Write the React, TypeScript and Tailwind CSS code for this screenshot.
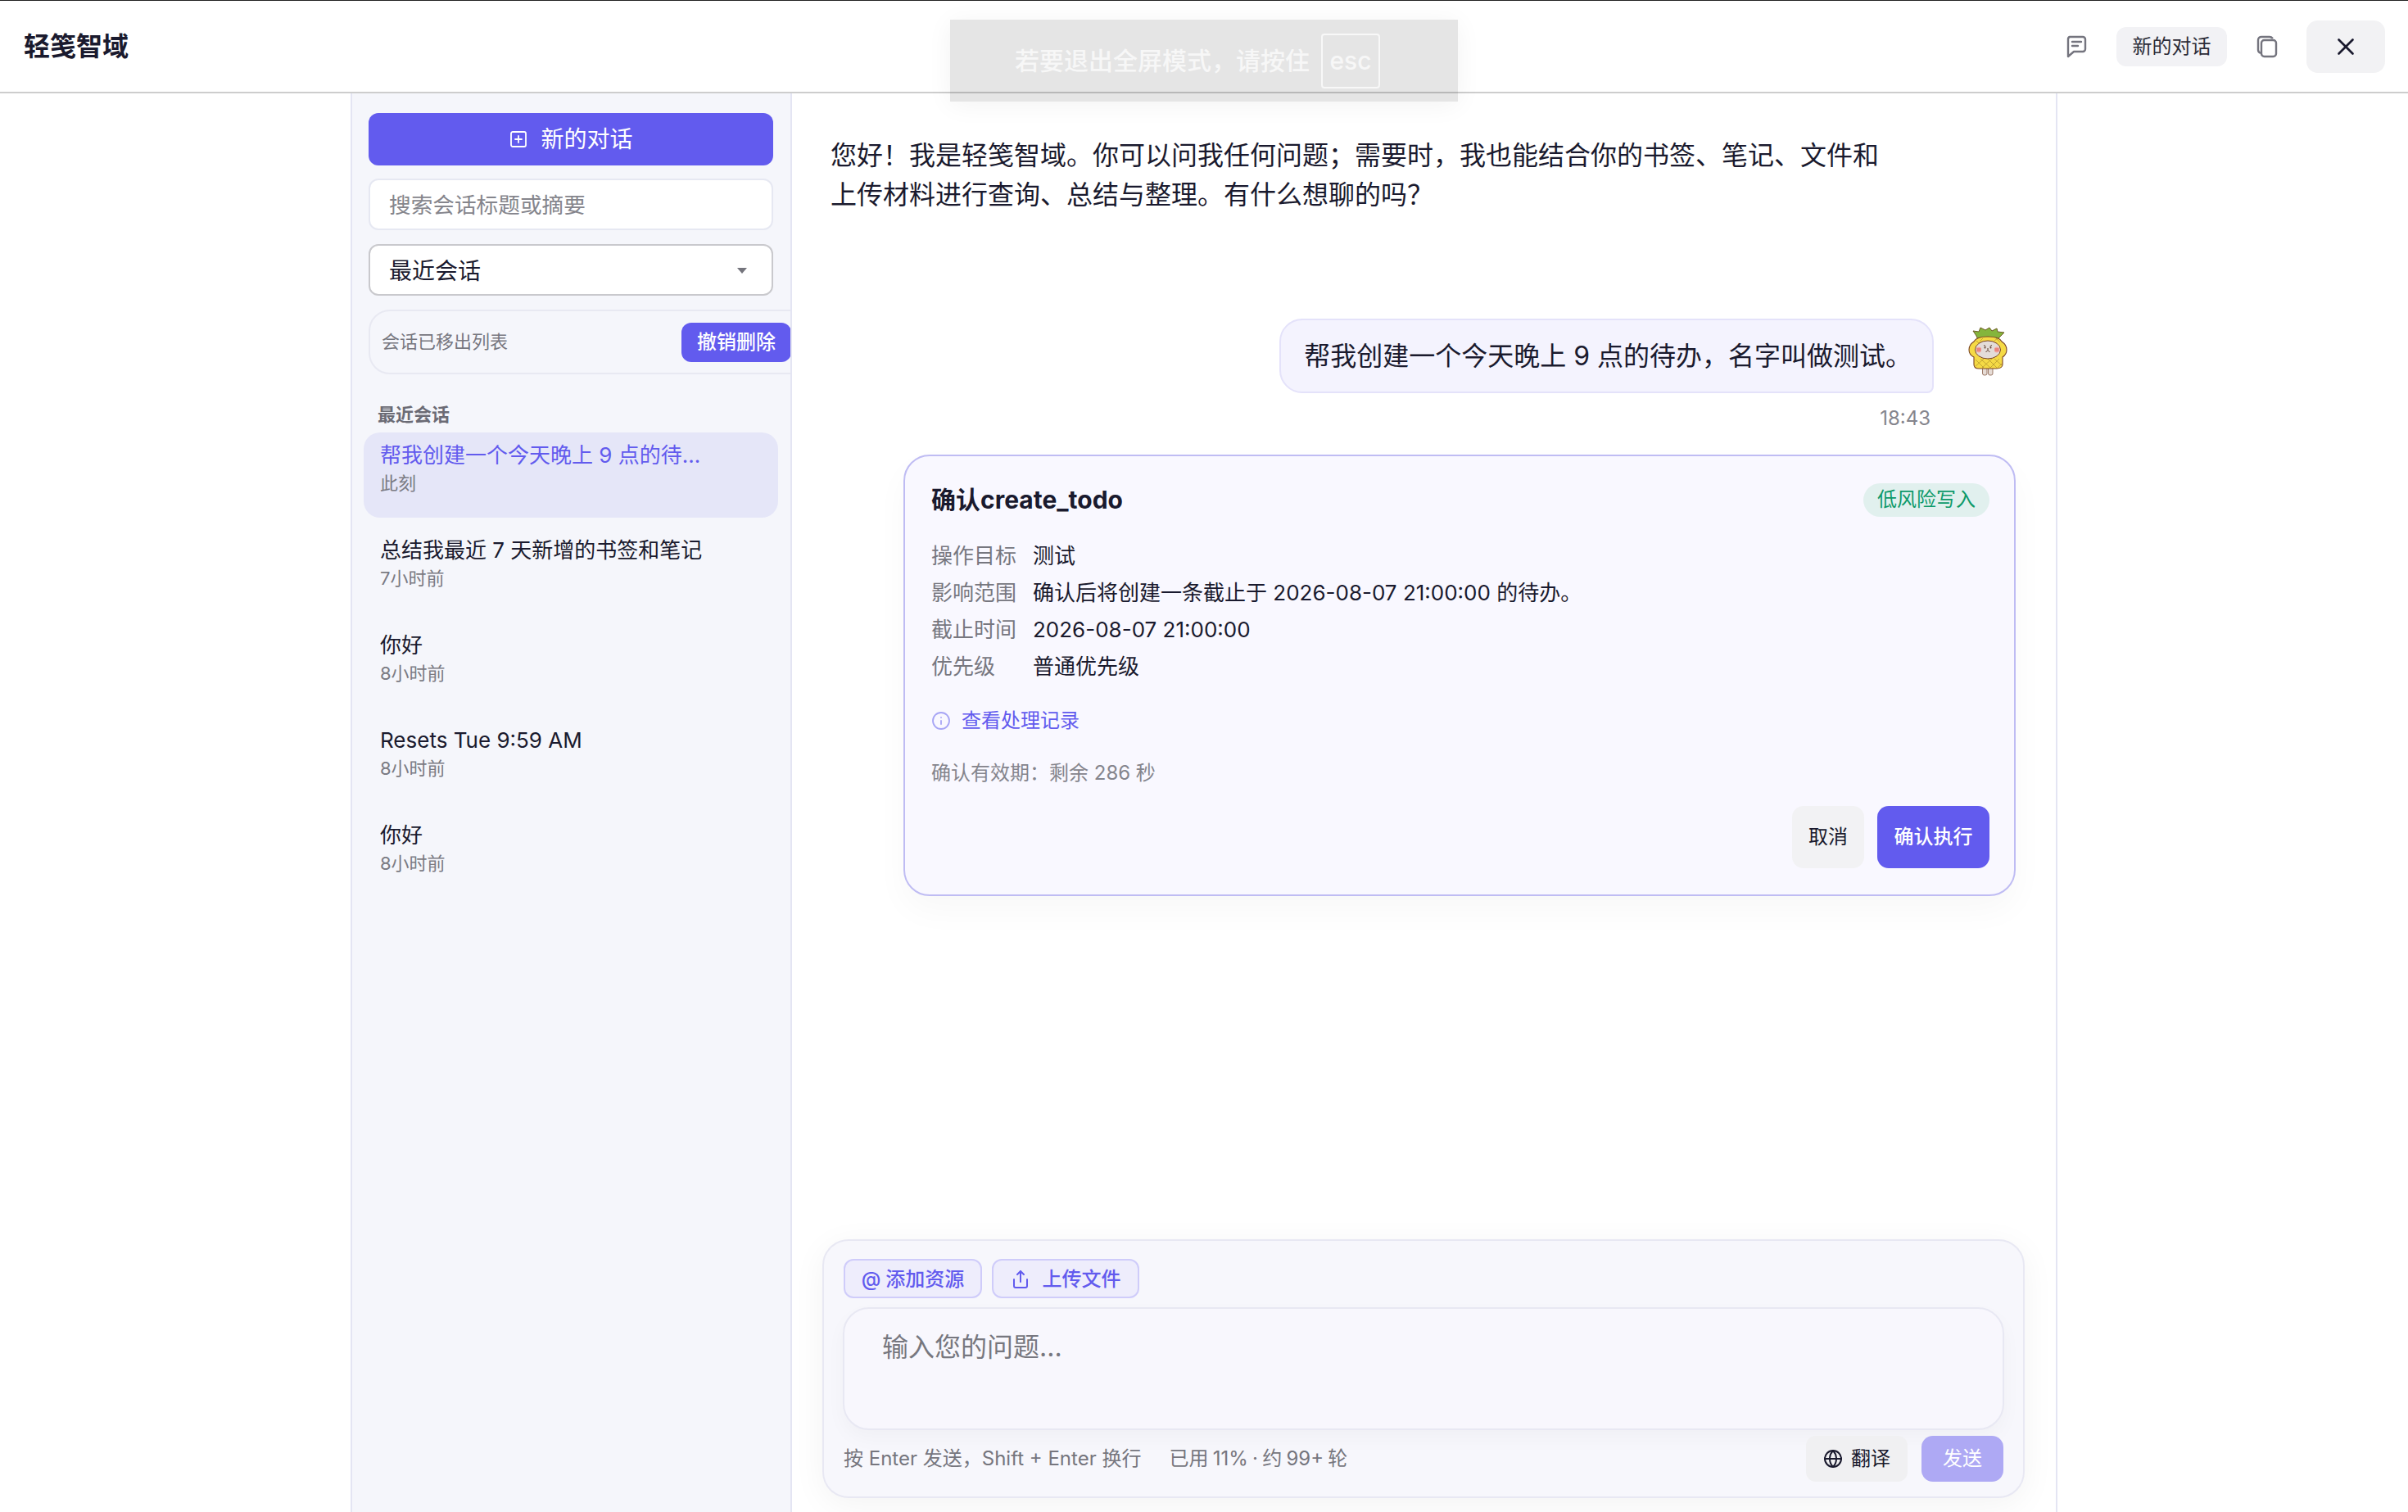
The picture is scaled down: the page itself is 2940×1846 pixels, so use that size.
import { Globe, Info, Share, SquarePlus, X } from "lucide-react";

const sessions = [
  { title: "帮我创建一个今天晚上 9 点的待办，名字叫做测试。", time: "此刻", active: true },
  { title: "总结我最近 7 天新增的书签和笔记", time: "7小时前" },
  { title: "你好", time: "8小时前" },
  { title: "Resets Tue 9:59 AM", time: "8小时前" },
  { title: "你好", time: "8小时前" },
];

const details = [
  { label: "操作目标", value: "测试" },
  { label: "影响范围", value: "确认后将创建一条截止于 2026-08-07 21:00:00 的待办。" },
  { label: "截止时间", value: "2026-08-07 21:00:00" },
  { label: "优先级", value: "普通优先级" },
];

const Pineapple = () => (
  <svg width="48" height="60" viewBox="0 0 48 60">
    {/* legs */}
    <rect x="17.5" y="49" width="5.5" height="10" rx="2" fill="#e6dcd6" stroke="#7a4a34" strokeWidth="0.7" />
    <rect x="24.5" y="49" width="5.5" height="10" rx="2" fill="#e6dcd6" stroke="#7a4a34" strokeWidth="0.7" />
    {/* crown */}
    <path
      d="M6 5 L13 6 L15 1 L21 4 L26 1 L29 5 L35 2 L36 6 L44 7 L38 13 L36 16 H12 L10 11 Z"
      fill="#84b53c"
      stroke="#6d5a23"
      strokeWidth="1"
      strokeLinejoin="round"
    />
    {/* body */}
    <path
      d="M24 12 C33 12 39 14 41 18 C44 20 47 24 47 28 C47 32 45 35 42 37 L42 46 C42 49 39 51 35 51 H13 C9 51 7 49 7 46 L7 37 C3 35 1 32 1 28 C1 24 4 20 7 18 C9 14 15 12 24 12 Z"
      fill="#f5da45"
      stroke="#7a4424"
      strokeWidth="1.1"
    />
    {/* skin lattice */}
    <path
      d="M9 40 L19 50 M15 39 L27 50 M24 39 L35 50 M32 39 L41 47 M9 48 L19 39 M17 50 L29 39 M27 50 L38 39 M36 50 L41 45 M10 17 L15 22 M34 14 L39 19 M18 14 L14 18 M32 17 L36 14"
      stroke="#b89a2e"
      strokeWidth="0.8"
      fill="none"
    />
    {/* face */}
    <ellipse cx="24" cy="28" rx="15.5" ry="11" fill="#e3dcd8" stroke="#7a4424" strokeWidth="1" />
    <rect x="10" y="24.5" width="6" height="7" rx="3" fill="#f4a7a0" />
    <rect x="32" y="24.5" width="6" height="7" rx="3" fill="#f4a7a0" />
    <path d="M10.5 27 H15.5 M10.5 29 H15.5 M32.5 27 H37.5 M32.5 29 H37.5" stroke="#d9534a" strokeWidth="0.8" />
    <path
      d="M19 22.5 L21.5 24 M29 22.5 L26.5 24 M24 26 V28.5 M24 28.5 L21.5 31 M24 28.5 L26.5 31"
      stroke="#5b3a29"
      strokeWidth="1"
      fill="none"
    />
    <circle cx="20.5" cy="25.5" r="1" fill="#5b3a29" />
    <circle cx="27.5" cy="25.5" r="1" fill="#5b3a29" />
  </svg>
);

const Header = () => (
  <header className="flex h-[114px] shrink-0 items-center justify-between border-t border-b-2 border-t-[#222222] border-b-[#cdcdcd] pr-[28px] pl-[29px]">
    <h1 className="text-[32px] font-bold text-[#1a1a2e]">轻笺智域</h1>
    <div className="flex items-center">
      <svg width="26" height="28" viewBox="0 0 26 28" fill="none" stroke="#74747e" strokeWidth="2.4" strokeLinejoin="round" strokeLinecap="round">
        <path d="M5 2 H21 A3 3 0 0 1 24 5 V17 A3 3 0 0 1 21 20 H10 L3 26 V5 A3 3 0 0 1 5 2 Z" />
        <path d="M8 8 H19 M8 13 H15" />
      </svg>
      <button className="ml-[36px] h-[48px] w-[135px] rounded-[12px] bg-[#f2f2f5] text-[24px] text-[#2c2c38]">新的对话</button>
      <svg className="ml-[36px]" width="26" height="28" viewBox="0 0 26 28" fill="none" stroke="#74747e" strokeWidth="2.4">
        <path d="M5 22 C3 21 2 20 2 18 V6 C2 3 4 2 6 2 H16 C18 2 19 3 20 4" />
        <rect x="6" y="6" width="18" height="20" rx="3.5" />
      </svg>
      <button className="ml-[35px] flex h-[64px] w-[96px] items-center justify-center rounded-[14px] bg-[#f2f2f4] text-[#1a1a2e]">
        <X size={34} strokeWidth={1.9} />
      </button>
    </div>
  </header>
);

const Sidebar = () => (
  <aside className="w-[537px] shrink-0 overflow-hidden border-r-2 border-[#e4e5f3] bg-[#f5f6fb] pt-[24px] pr-[21px] pl-[20px]">
    <button className="flex h-[64px] w-[494px] items-center justify-center gap-[15px] rounded-[12px] bg-[#625bee] text-[28px] text-white">
      <SquarePlus size={24} strokeWidth={1.8} />
      新的对话
    </button>
    <input
      placeholder="搜索会话标题或摘要"
      className="mt-[16px] h-[63px] w-[494px] rounded-[12px] border-2 border-[#e6e8f2] bg-white px-[23px] text-[26.67px] text-[#1a1a2e] outline-none placeholder:text-[#85858c]"
    />
    <div className="mt-[17px] flex h-[63px] w-[494px] items-center justify-between rounded-[12px] border-2 border-[#c9c9cd] bg-white pt-[2px] pr-[30px] pl-[23px] text-[28px] text-[#1a1a2e]">
      最近会话
      <span className="h-0 w-0 border-x-[6px] border-t-[7px] border-x-transparent border-t-[#74747c]" />
    </div>
    <div className="mt-[17px] flex h-[79px] w-[540px] items-center justify-between rounded-[26px] border-2 border-[#e8e9f2] pr-[22px] pl-[14px]">
      <span className="text-[22px] text-[#77777f]">会话已移出列表</span>
      <button className="h-[48px] w-[134px] rounded-[12px] bg-[#625bee] text-[24px] font-medium text-white">撤销删除</button>
    </div>
    <div className="mt-[34px] mb-[7px] ml-[11px] text-[22px] leading-[30px] font-semibold text-[#6b6b75]">最近会话</div>
    <div className="-ml-[6px] flex w-[506px] flex-col gap-[12px]">
      {sessions.map((s, idx) => (
        <div key={idx} className={`h-[104px] rounded-[20px] pt-[11px] pl-[20px] ${s.active ? "bg-[#e5e6f8]" : ""}`}>
          <div className={`w-[396px] truncate text-[26px] leading-[34px] ${s.active ? "text-[#625bee]" : "text-[#1a1a2e]"}`}>{s.title}</div>
          <div className="text-[22px] leading-[34px] text-[#7b7b83]">{s.time}</div>
        </div>
      ))}
    </div>
  </aside>
);

const ConfirmCard = () => (
  <div className="mt-[29px] ml-[89px] flex h-[539px] flex-col rounded-[32px] border-2 border-[#bfbcf3] bg-[#f9f8ff] pt-[31px] pr-[30px] pb-[32px] pl-[32px] shadow-[0_18px_40px_rgba(0,0,0,0.03)]">
    <div className="flex items-center justify-between">
      <h3 className="text-[30px] leading-[44px] font-bold text-[#1a1a2e]">确认create_todo</h3>
      <span className="flex h-[41px] w-[154px] items-center justify-center rounded-full bg-[#e1f0ee] text-[24px] text-[#0e9a6a]">低风险写入</span>
    </div>
    <div className="mt-[24px]">
      {details.map((d) => (
        <div key={d.label} className="flex h-[45px] items-center text-[26px]">
          <span className="w-[124px] shrink-0 text-[#77777f]">{d.label}</span>
          <span className="text-[#1a1a2e]">{d.value}</span>
        </div>
      ))}
    </div>
    <div className="mt-[26px] flex items-center gap-[13px] text-[24px] leading-[36px] text-[#625bee]">
      <Info size={24} strokeWidth={1.8} className="text-[#a7a5f5]" />
      查看处理记录
    </div>
    <div className="mt-[28px] text-[24px] leading-[36px] text-[#85858d]">确认有效期：剩余 286 秒</div>
    <div className="mt-auto flex justify-end gap-[16px]">
      <button className="h-[76px] w-[88px] rounded-[14px] bg-[#f2f2f4] text-[24px] text-[#1a1a2e]">取消</button>
      <button className="h-[76px] w-[137px] rounded-[14px] bg-[#625bee] text-[24px] font-medium text-white">确认执行</button>
    </div>
  </div>
);

const Composer = () => (
  <div className="mr-[38px] mb-[17px] ml-[37px] rounded-[32px] border-2 border-[#e8e8f3] bg-[#f7f7fc] px-[23px] pt-[22px] pb-[18px] shadow-[0_8px_40px_rgba(0,0,0,0.05)]">
    <div className="flex gap-[12px] pl-[1px]">
      <button className="flex h-[48px] w-[169px] items-center justify-center gap-[6px] rounded-[12px] border-2 border-[#cfccfa] bg-[#eeedfc] pt-[1px] text-[24px] font-medium text-[#625bee]">
        <span>@</span>添加资源
      </button>
      <button className="flex h-[48px] w-[180px] items-center justify-center gap-[15px] rounded-[12px] border-2 border-[#cfccfa] bg-[#eeedfc] pt-[1px] text-[24px] font-medium text-[#625bee]">
        <Share size={24} strokeWidth={2} />
        上传文件
      </button>
    </div>
    <textarea
      placeholder="输入您的问题..."
      className="mt-[11px] block h-[150px] w-full resize-none rounded-[32px] border-2 border-[#e8e8f3] bg-[#f8f7fd] px-[46px] pt-[23px] text-[32px] leading-[48px] outline-none shadow-[0_10px_24px_rgba(0,0,0,0.03)] placeholder:text-[#77777f]"
    />
    <div className="mt-[7px] mr-[1px] flex h-[56px] items-center pl-[1px] text-[24px] text-[#76767e]">
      <span>按 Enter 发送，Shift + Enter 换行</span>
      <span className="ml-[34px] [word-spacing:-1.5px]">已用 11% · 约 99+ 轮</span>
      <button className="ml-auto flex h-[56px] w-[124px] items-center justify-center gap-[10px] rounded-[12px] bg-[#f0f0f2] text-[#1a1a2e]">
        <Globe size={24} strokeWidth={2} />
        翻译
      </button>
      <button className="ml-[17px] h-[56px] w-[100px] rounded-[14px] bg-[#aea9f4] text-white">发送</button>
    </div>
  </div>
);

const App = () => {
  return (
    <div className="relative flex h-[1846px] w-full flex-col overflow-hidden bg-white font-['Inter','Noto_Sans_CJK_SC',sans-serif]">
      <Header />
      <div className="mx-auto flex min-h-0 w-[2084px] flex-1 border-x-2 border-[#e4e5f3]">
        <Sidebar />
        <main className="flex min-w-0 flex-1 flex-col">
          <div className="min-h-0 flex-1 pt-[52px] pr-[49px] pl-[47px]">
            <p className="w-[1290px] text-[32px] leading-[48px] text-[#1a1a2e]">
              您好！我是轻笺智域。你可以问我任何问题；需要时，我也能结合你的书签、笔记、文件和上传材料进行查询、总结与整理。有什么想聊的吗？
            </p>
            <div className="mt-[127px] flex items-start justify-end">
              <div className="flex h-[91px] items-center rounded-[28px] rounded-br-[8px] border-2 border-[#e4e2fa] bg-[#f4f3fe] pr-[25px] pl-[28px] text-[32px] text-[#1a1a2e]">
                帮我创建一个今天晚上 9 点的待办，名字叫做测试。
              </div>
              <div className="mt-[10px] mr-[10px] ml-[42px]">
                <Pineapple />
              </div>
            </div>
            <div className="mt-[16px] pr-[104px] text-right text-[24px] leading-[30px] text-[#85858d]">18:43</div>
            <ConfirmCard />
          </div>
          <Composer />
        </main>
      </div>
      {/* browser fullscreen hint */}
      <div className="absolute top-[24px] left-[1160px] flex h-[100px] w-[620px] items-center gap-[14px] bg-black/10 pl-[79px] text-[30px] font-medium text-[#f7f7f7] shadow-[0_4px_30px_rgba(0,0,0,0.05)]">
        <span>若要退出全屏模式，请按住</span>
        <span className="flex h-[67px] w-[72px] items-center justify-center rounded-[4px] border-2 border-[#f8f8f8]">esc</span>
      </div>
    </div>
  );
};

export default App;
